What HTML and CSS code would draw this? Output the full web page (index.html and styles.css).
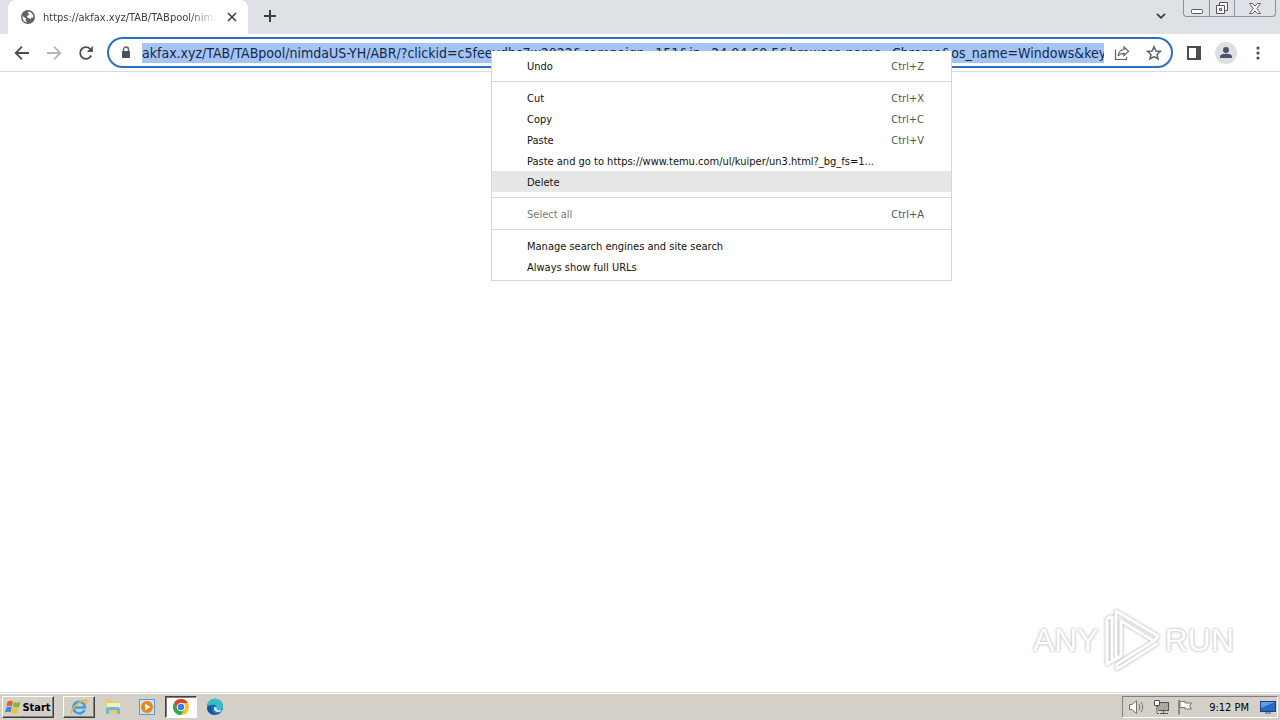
FILE: index.html
```
<!DOCTYPE html>
<html lang="en">
<head>
    <meta charset="UTF-8">
    <title>akfax.xyz</title>
    <link rel="stylesheet" href="styles.css">
</head>
<body>
<header class="tabstrip">
    <div class="tab">
        <svg class="favicon" width="14" height="14" viewBox="0 0 14 14">
            <circle cx="7" cy="7" r="7" fill="#5f6368"/>
            <path d="M1.5 6 L5 8.5 L4.5 10 L6 12.4 A5.5 5.5 0 0 1 1.5 6 Z M7.5 1.6 A5.6 5.6 0 0 1 12.4 7.5 L10.5 7.5 L9.5 9 L6.5 7.5 L6 6 L8 5 L8 3.5 L6.5 3 Z" fill="#fff"/>
        </svg>
        <span class="tab-title">https://akfax.xyz/TAB/TABpool/nimd</span>
        <button class="icon-btn tab-close" aria-label="Close tab">
            <svg width="10" height="10" viewBox="0 0 10 10"><path d="M1 1 L9 9 M9 1 L1 9" stroke="#3c4043" stroke-width="1.6"/></svg>
        </button>
    </div>
    <button class="icon-btn new-tab" aria-label="New tab">
        <svg width="12" height="12" viewBox="0 0 12 12"><path d="M6 0 V12 M0 6 H12" stroke="#3c4043" stroke-width="2"/></svg>
    </button>
    <button class="icon-btn tab-search" aria-label="Search tabs">
        <svg width="10" height="6" viewBox="0 0 10 6"><path d="M1 .8 L5 4.8 L9 .8" fill="none" stroke="#3c4043" stroke-width="1.8"/></svg>
    </button>
    <div class="window-buttons">
        <button aria-label="Minimize">
            <svg width="12" height="14" viewBox="0 0 12 14"><rect x=".5" y="8.5" width="11" height="4" rx="1" fill="#fff" stroke="#535666"/></svg>
        </button>
        <button aria-label="Restore">
            <svg width="14" height="14" viewBox="0 0 14 14"><path d="M4.5 1.5 H12.5 V9.5 H4.5 Z" fill="#fff" stroke="#535666"/><path d="M1.5 4.5 H9.5 V12.5 H1.5 Z" fill="#fff" stroke="#535666"/><path d="M4.5 7.5 H6.5 V9.5 H4.5 Z" fill="none" stroke="#535666"/></svg>
        </button>
        <button class="win-close" aria-label="Close">
            <svg width="12" height="11" viewBox="0 0 13 12"><path d="M.5 .5 H4 L6.5 3.5 L9 .5 H12.5 L8.5 6 L12.5 11.5 H9 L6.5 8.5 L4 11.5 H.5 L4.5 6 Z" fill="#fff" stroke="#535666"/></svg>
        </button>
    </div>
</header>

<nav class="toolbar">
    <button class="icon-btn" aria-label="Back">
        <svg width="16" height="16" viewBox="0 0 16 16"><path d="M15 8 H2 M8 1.7 L1.7 8 L8 14.3" fill="none" stroke="#4a4d51" stroke-width="1.8"/></svg>
    </button>
    <button class="icon-btn" aria-label="Forward" disabled>
        <svg width="16" height="16" viewBox="0 0 16 16"><path d="M1 8 H14 M8 1.7 L14.3 8 L8 14.3" fill="none" stroke="#b4b6b9" stroke-width="1.8"/></svg>
    </button>
    <button class="icon-btn" aria-label="Reload">
        <svg width="16" height="16" viewBox="0 0 16 16"><path d="M13.2 10.5 A5.8 5.8 0 1 1 12 3.8" fill="none" stroke="#4a4d51" stroke-width="1.8"/><path d="M14.8 1 V7 H8.8 Z" fill="#4a4d51"/></svg>
    </button>
    <div class="omnibox">
        <svg class="lock" width="10" height="14" viewBox="0 0 10 14"><path d="M2.5 6 V3.5 A2.5 2.5 0 0 1 7.5 3.5 V6" fill="none" stroke="#5f6368" stroke-width="1.4"/><rect x="1" y="5" width="8" height="7" rx="1" fill="#4d5054"/></svg>
        <input class="url" type="text" aria-label="Address" spellcheck="false" value="akfax.xyz/TAB/TABpool/nimdaUS-YH/ABR/?clickid=c5feeydbs7w2022&amp;campaign=151&amp;ip=24.04.60.5&amp;browser_name=Chrome&amp;os_name=Windows&amp;key2=value">
        <button class="icon-btn share" aria-label="Share">
            <svg width="16" height="16" viewBox="0 0 16 16"><path d="M1.500 4.500 V14.500 H12.500 V12" fill="none" stroke="#5f6368" stroke-width="1.200"/><path d="M10 2 L14.500 6.300 L10 10.500 V8.300 C7 8.300 5.500 9 4 11 C4.500 7.500 6.500 5 10 4.500 Z" fill="none" stroke="#5f6368" stroke-width="1.200"/></svg>
        </button>
        <button class="icon-btn star" aria-label="Bookmark this tab">
            <svg width="16" height="16" viewBox="0 0 16 16"><path d="M8 1.7 L9.9 6 L14.5 6.4 L11 9.5 L12 14 L8 11.6 L4 14 L5 9.5 L1.5 6.4 L6.1 6 Z" fill="none" stroke="#5f6368" stroke-width="1.5"/></svg>
        </button>
    </div>
    <button class="icon-btn" aria-label="Side panel">
        <svg width="14" height="14" viewBox="0 0 14 14"><rect x="1" y="1" width="12" height="12" fill="none" stroke="#4a4d51" stroke-width="2"/><rect x="9" y="1" width="4" height="12" fill="#4a4d51"/></svg>
    </button>
    <button class="icon-btn" aria-label="Profile">
        <svg width="22" height="22" viewBox="0 0 22 22"><circle cx="11" cy="11" r="11" fill="#dcdfe3"/><circle cx="11" cy="8" r="3" fill="#4a5569"/><path d="M5 16 V14.5 C5 12.5 8.5 11.8 11 11.8 S17 12.5 17 14.5 V16 Z" fill="#4a5569"/></svg>
    </button>
    <button class="icon-btn" aria-label="Menu">
        <svg width="4" height="14" viewBox="0 0 4 14"><g fill="#4a4d51"><circle cx="2" cy="2" r="1.6"/><circle cx="2" cy="7" r="1.6"/><circle cx="2" cy="12" r="1.6"/></g></svg>
    </button>
</nav>

<main class="page">
    <div class="watermark">
        <span>ANY</span>
        <svg width="58" height="64" viewBox="0 0 58 64">
            <g fill="none" stroke="#fff" stroke-width="3" stroke-linejoin="round">
                <path d="M13 3 L55 28 L51 33 L18 13 V48 L13 51 Z"/>
                <path d="M9 8 L4 11 V56 L18 48"/>
                <path d="M9 8 V53 M55 35 L14 61 V56 L51 33"/>
            </g>
        </svg>
        <span>RUN</span>
    </div>
</main>

<ul class="menu">
    <li><button>Undo<kbd>Ctrl+Z</kbd></button></li>
    <li class="divider"></li>
    <li><button>Cut<kbd>Ctrl+X</kbd></button></li>
    <li><button>Copy<kbd>Ctrl+C</kbd></button></li>
    <li><button>Paste<kbd>Ctrl+V</kbd></button></li>
    <li><button>Paste and go to https://www.temu.com/ul/kuiper/un3.html?_bg_fs=1...</button></li>
    <li><button class="active">Delete</button></li>
    <li class="divider"></li>
    <li><button disabled>Select all<kbd>Ctrl+A</kbd></button></li>
    <li class="divider"></li>
    <li><button>Manage search engines and site search</button></li>
    <li><button>Always show full URLs</button></li>
</ul>

<footer class="taskbar">
    <button class="start">
        <svg width="16" height="16" viewBox="0 0 16 16"><path d="M2.5 2.5 Q5 1 8 2.5 L7 7.5 Q4 6 1.5 7.5 Z" fill="#e8602c"/><path d="M9 3 Q12 4.5 15.5 3 L14 8 Q11 9 8 7.8 Z" fill="#7db93a"/><path d="M1.3 8.5 Q4 7 6.8 8.5 L5.6 13.5 Q3 12 0 13.5 Z" fill="#3b87d4"/><path d="M7.8 9 Q11 10.2 13.7 9 L12.5 14 Q9.5 15.5 6.6 14 Z" fill="#f8bf2c"/></svg>
        Start
    </button>
    <button class="task raised" aria-label="Internet Explorer">
        <svg width="18" height="18" viewBox="0 0 18 18"><path d="M14.5 12 A5.8 5.8 0 1 1 15 9.5 H5" fill="none" stroke="#38a3e4" stroke-width="2.6"/><path d="M2 16 C-1 13 8 3 16 2 Q18 3 15.5 6" fill="none" stroke="#efb62e" stroke-width="1.5"/></svg>
    </button>
    <button class="task" aria-label="Explorer">
        <svg width="18" height="18" viewBox="0 0 18 18"><path d="M2 2 H7 L8.5 4 H15 V15 H2 Z" fill="#e6c968"/><path d="M3 5 H16 V11 H3 Z" fill="#fbeeb2"/><path d="M2 16 V11 Q2 9 4 9 H14 Q16 9 16 11 V16 H13 V12 H5 V16 Z" fill="#6cb8dd"/></svg>
    </button>
    <button class="task" aria-label="Media Player">
        <svg width="18" height="18" viewBox="0 0 18 18"><rect x="1.5" y="1.5" width="15" height="15" fill="#c9e2f5" stroke="#5b9bd0"/><circle cx="9" cy="9" r="6" fill="#f08119"/><path d="M7 5.5 L12.5 9 L7 12.5 Z" fill="#fff"/></svg>
    </button>
    <button class="task pressed" aria-label="Chrome">
        <svg width="18" height="18" viewBox="0 0 18 18"><circle cx="9" cy="9" r="8" fill="#fbc116"/><path d="M2.07 5 A8 8 0 0 1 15.93 5 H9 L5.5 11 Z" fill="#e33b2e"/><path d="M2.07 5 A8 8 0 0 0 9 17 L12.5 11 H5.5 Z" fill="#2da94f"/><circle cx="9" cy="9" r="4.3" fill="#fff"/><circle cx="9" cy="9" r="3.3" fill="#3b7ded"/></svg>
    </button>
    <button class="task" aria-label="Edge">
        <svg width="18" height="18" viewBox="0 0 18 18"><circle cx="9" cy="9" r="8" fill="#1572c4"/><path d="M1 9 A8 8 0 0 1 17 8 Q17 12 12.5 12 Q10 12 10.5 10 Q11 6.5 7 6.5 Q3 6.5 1 9 Z" fill="#35bfc2"/><path d="M10.5 9 Q10 12 13 12.3 L16 11.5 L14 14 Q7 15 8 9 Z" fill="#d4e6ef"/><path d="M6 8 Q4 14 10 17 Q1 17 1 9 Q3 6.5 6 8 Z" fill="#1553a0"/></svg>
    </button>
    <div class="tray">
        <svg width="18" height="16" viewBox="0 0 18 16"><path d="M1.5 5.5 H4 L8.5 1.5 V14.5 L4 10.5 H1.5 Z" fill="#fff" stroke="#77756f"/><path d="M11 5 Q13 8 11 11 M13 3 Q16.5 8 13 13" fill="none" stroke="#77756f"/></svg>
        <svg width="17" height="16" viewBox="0 0 17 16"><rect x="4.5" y="3.5" width="11" height="8" fill="#aaa8a2" stroke="#55534e"/><path d="M7 14.5 H15 M10.5 12 V14" stroke="#55534e"/><path d="M1.5 1.5 H6.5 V6.5 H1.5 Z M4 7 V14.5 H6" fill="#fff" stroke="#55534e"/></svg>
        <svg width="16" height="16" viewBox="0 0 16 16"><path d="M2 1 V15.5" stroke="#77756f" stroke-width="1.5"/><path d="M3 2.5 H8 V4 H14.500 L12.500 7 L14.500 10 H8 V8.500 H3 Z" fill="#fff" stroke="#77756f"/></svg>
        <time class="clock">9:12 PM</time>
        <svg class="desktop" width="16" height="14" viewBox="0 0 16 14"><rect x=".5" y="1.5" width="15" height="10" fill="#2a69c0" stroke="#164486"/><path d="M1 2 H15 L1 8 Z" fill="#5f9ee6"/><path d="M5 13 H11" stroke="#555"/></svg>
    </div>
</footer>
</body>
</html>
```
FILE: styles.css
```
* {
    box-sizing: border-box;
}
body {
    display: flex;
    flex-direction: column;
    min-height: 100vh;
    margin: 0;
    background: #fff;
    font-family: "DejaVu Sans Condensed", "DejaVu Sans", sans-serif;
    font-size: 11px;
}
button {
    display: flex;
    align-items: center;
    justify-content: center;
    padding: 0;
    border: 0;
    background: none;
    color: inherit;
    font: inherit;
}
svg {
    flex: none;
}
.icon-btn {
    flex: none;
    width: 32px;
    height: 32px;
}

/* tab strip */
.tabstrip {
    display: flex;
    height: 34px;
    padding-left: 8px;
    background: #dee1e6;
}
.tab {
    display: flex;
    align-items: center;
    width: 240px;
    padding-left: 13px;
    border-radius: 8px 8px 0 0;
    background: #fff;
    color: #3c4043;
}
.tab-title {
    flex: 1;
    margin-left: 8px;
    overflow: hidden;
    white-space: nowrap;
    -webkit-mask-image: linear-gradient(to right, #000 85%, transparent);
    mask-image: linear-gradient(to right, #000 85%, transparent);
}
.tab-close {
    width: 32px;
}
.new-tab {
    margin-left: 6px;
}
.tab-search {
    margin-left: auto;
    margin-right: 6px;
}
.window-buttons {
    display: flex;
    height: 17px;
    margin-right: 4px;
    border: 1px solid #8e919b;
    border-top: 0;
    border-radius: 0 0 4px 4px;
}
.window-buttons button {
    width: 25px;
}
.window-buttons button + button {
    border-left: 1px solid #8e919b;
}
.window-buttons .win-close {
    width: 41px;
}

/* toolbar */
.toolbar {
    display: flex;
    align-items: center;
    height: 38px;
    padding: 0 6px;
    border-bottom: 1px solid #dadce0;
}
.omnibox {
    display: flex;
    flex: 1;
    align-items: center;
    height: 31px;
    margin: 0 5px;
    padding: 0 1px 0 12px;
    border: 2px solid #2a6fc9;
    border-radius: 16px;
}
.lock {
    margin-right: 11px;
}
.url {
    flex: 1;
    min-width: 0;
    height: 20px;
    padding: 0;
    border: 0;
    outline: 0;
    background: #a4c5f4;
    color: #14284a;
    font-family: inherit;
    font-size: 14px;
}
.share {
    margin-left: 2px;
}

/* page */
.page {
    display: flex;
    flex: 1;
    align-items: flex-end;
    justify-content: flex-end;
    padding: 0 46px 20px;
}
.watermark {
    display: flex;
    align-items: center;
    gap: 4px;
    color: #fff;
    font-family: "Liberation Sans Narrow", "Liberation Sans", sans-serif;
    font-size: 32px;
    filter: drop-shadow(0 0 1px #ccc) drop-shadow(0 0 1px #ccc);
}

/* context menu */
.menu {
    position: absolute;
    top: 51px;
    left: 491px;
    width: 461px;
    margin: 0;
    padding: 4px 0 3px;
    border: 1px solid #d5d5d5;
    border-top: 0;
    background: #fff;
    color: #111;
    list-style: none;
}
.menu button {
    justify-content: space-between;
    width: 100%;
    height: 21px;
    padding: 2px 27px 0 35px;
    white-space: nowrap;
}
.menu button.active {
    background: #e7e7e7;
}
.menu button:disabled {
    color: #777;
}
.menu kbd {
    color: #555;
    font: inherit;
}
.divider {
    height: 1px;
    margin: 5px 0;
    background: #d8d8d8;
}

/* taskbar */
.taskbar {
    display: flex;
    align-items: center;
    height: 28px;
    padding: 1px 2px 0;
    border-top: 1px solid #dedbd5;
    background: #d4d0c8;
    box-shadow: inset 0 1px #fff;
}
.start {
    gap: 1px;
    width: 52px;
    height: 22px;
    margin-right: 9px;
    border: 1px solid;
    border-color: #fff #404040 #404040 #fff;
    box-shadow: inset -1px -1px #808080;
    color: #000;
    font-weight: bold;
}
.task {
    width: 32px;
    height: 22px;
    margin-right: 2px;
}
.raised {
    border: 1px solid;
    border-color: #fff #404040 #404040 #fff;
    box-shadow: inset -1px -1px #808080;
}
.pressed {
    border: 1px solid;
    border-color: #404040 #fff #fff #404040;
    background: #fff;
    box-shadow: inset 1px 1px #808080;
}
.tray {
    display: flex;
    align-items: center;
    gap: 7px;
    height: 22px;
    margin-left: auto;
    padding: 0 1px 0 5px;
    border: 1px solid;
    border-color: #808080 #fff #fff #808080;
    color: #000;
}
.clock {
    margin: 0 4px 0 9px;
}
```
